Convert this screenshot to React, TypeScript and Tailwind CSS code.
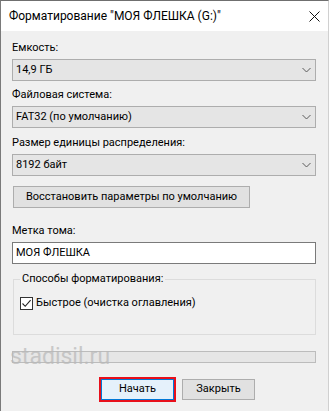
const font = { fontFamily: 'Roboto, "Liberation Sans", sans-serif' };

function Chevron() {
  return (
    <svg width="9" height="6" viewBox="0 0 9 6" fill="none">
      <path d="M0.5 1 L4.5 5 L8.5 1" stroke="#5a5a5a" strokeWidth="1" />
    </svg>
  );
}

function Select({ value }: { value: string }) {
  return (
    <div className="flex h-[22px] items-center justify-between border border-[#adadad] bg-[#e5e5e5] pl-[3px] pr-[4px] text-[11px] text-black">
      <span>{value}</span>
      <Chevron />
    </div>
  );
}

function Label({ text, className = "" }: { text: string; className?: string }) {
  return <div className={`h-[16px] text-[11px] leading-[16px] text-black ${className}`}>{text}</div>;
}

export default function App() {
  return (
    <div
      className="relative h-[411px] w-[329px] overflow-hidden border-t border-l border-r border-t-[#6f6f6f] border-l-[#7a7a7a] border-r-[#d0d0d0] bg-[#f0f0f0] text-black"
      style={font}
    >
      <div className="flex h-[30px] items-center justify-between bg-white pl-[8px] pr-[8px]">
        <span className="text-[12px] text-black">Форматирование "МОЯ ФЛЕШКА (G:)"</span>
        <svg width="11" height="11" viewBox="0 0 11 11" fill="none">
          <path d="M0.5 0.5 L10.5 10.5 M10.5 0.5 L0.5 10.5" stroke="#111" strokeWidth="1" />
        </svg>
      </div>

      <div className="flex flex-col pl-[11px] pr-[12px] pt-[9px]">
        <Label text="Емкость:" />
        <div className="mt-[3px]">
          <Select value="14,9 ГБ" />
        </div>

        <Label text="Файловая система:" className="mt-[6px]" />
        <div className="mt-[3px]">
          <Select value="FAT32 (по умолчанию)" />
        </div>

        <Label text="Размер единицы распределения:" className="mt-[7px]" />
        <div className="mt-[3px]">
          <Select value="8192 байт" />
        </div>

        <button
          type="button"
          className="ml-px mt-[10px] h-[22px] w-[237px] whitespace-nowrap border border-[#adadad] bg-[#e1e1e1] text-[11px] text-black"
        >
          Восстановить параметры по умолчанию
        </button>

        <Label text="Метка тома:" className="mt-[15px]" />
        <div className="mt-[3px] flex h-[22px] items-center border border-[#7a7a7a] bg-white pl-[3px] text-[11px]">
          МОЯ ФЛЕШКА
        </div>

        <fieldset className="ml-px mt-[7px] h-[64px] border border-[#dcdcdc] px-[6px] pb-0 pt-0">
          <legend className="px-[2px] text-[11px] leading-[16px] text-black">Способы форматирования:</legend>
          <label className="mt-[8px] flex items-center gap-[2px] text-[11px]">
            <span className="flex h-[13px] w-[13px] items-center justify-center border border-[#333333] bg-white">
              <svg width="11" height="11" viewBox="0 0 11 11" fill="none">
                <path d="M1.5 5.5 L4.2 8.3 L9.6 2.2" stroke="#222" strokeWidth="1.1" />
              </svg>
            </span>
            <span className="ml-px">Быстрое (очистка оглавления)</span>
          </label>
        </fieldset>

        <div className="mt-[16px] h-[12px] border border-[#bcbcbc] bg-[#e6e6e6]" />

        <div className="ml-[89px] mt-[16px] flex gap-[8px]">
          <button
            type="button"
            className="h-[21px] w-[73px] border border-[#0078d7] bg-[#e5f1fb] text-[11px] text-black outline-2 outline-[#e8101b] outline-solid"
          >
            Начать
          </button>
          <button
            type="button"
            className="h-[21px] w-[73px] border border-[#adadad] bg-[#e1e1e1] text-[11px] text-black"
          >
            Закрыть
          </button>
        </div>
      </div>

      <div
        className="pointer-events-none absolute left-[9px] top-[341px] text-[23px] leading-[30px] text-[#b8b8b8] opacity-70"
        style={{ fontFamily: "Roboto, sans-serif" }}
      >
        stadisil.ru
      </div>
    </div>
  );
}
